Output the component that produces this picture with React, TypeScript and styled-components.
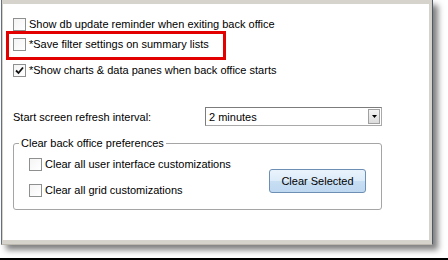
import styled, { createGlobalStyle } from "styled-components";

const GlobalStyle = createGlobalStyle`
  html, body {
    margin: 0;
    padding: 0;
    background: #fff;
  }
  body {
    font-family: "Liberation Sans", Arial, sans-serif;
    font-size: 11px;
    color: #000;
  }
`;

const Page = styled.div`
  width: 448px;
  height: 260px;
  box-sizing: border-box;
  border-bottom: 2px solid #000;
  overflow: hidden;
`;

const Frame = styled.div`
  margin-left: 1px;
  width: 432px;
  height: 245px;
  box-sizing: border-box;
  padding: 4px 3px 4px 1px;
  background: #d6d3cd;
  border-left: 1px solid #66707c;
  border-right: 1px solid #4f5966;
  border-bottom: 1px solid #bdb9b1;
  box-shadow: 5px 5px 6px rgba(0, 0, 0, 0.5);
  display: flex;
`;

const Panel = styled.div`
  flex: 1;
  background: #fff;
  padding: 14px 0 0 10px;
  display: flex;
  flex-direction: column;
`;

const CheckRow = styled.label<{ $top?: number }>`
  display: flex;
  align-items: center;
  gap: 3px;
  height: 13px;
  line-height: 13px;
  margin-top: ${({ $top }) => $top ?? 0}px;
  white-space: nowrap;
`;

const Box = styled.span`
  width: 13px;
  height: 13px;
  box-sizing: border-box;
  border: 1px solid #8e8f8f;
  background: linear-gradient(135deg, #f4f4f4, #fff);
  display: flex;
  align-items: center;
  justify-content: center;
  flex-shrink: 0;
`;

const Highlight = styled.div`
  margin-left: -7px;
  width: 220px;
  box-sizing: border-box;
  border: 3px solid #e30000;
  padding: 4px 0 6px 4px;
`;

const IntervalRow = styled.div`
  margin-top: 30px;
  display: flex;
  align-items: center;
`;

const Label = styled.span`
  width: 192px;
`;

const Select = styled.div`
  width: 177px;
  height: 19px;
  box-sizing: border-box;
  border: 1px solid #7c7c7c;
  border-right-color: #a9a9a9;
  border-bottom-color: #a9a9a9;
  display: flex;
  align-items: center;
  padding: 0 1px 0 3px;
`;

const SelectText = styled.span`
  flex: 1;
`;

const DropButton = styled.span`
  width: 12px;
  height: 15px;
  box-sizing: border-box;
  border: 1px solid #a0a0a0;
  background: linear-gradient(#f4f4f4, #dcdcdc);
  display: flex;
  align-items: center;
  justify-content: center;
`;

const Group = styled.fieldset`
  margin: 11px 0 0 0;
  width: 369px;
  box-sizing: border-box;
  border: 1px solid #a5a5a5;
  border-radius: 3px;
  padding: 0 15px 12px 15px;
  min-width: 0;
`;

const Legend = styled.legend`
  margin-left: -10px;
  padding: 0 2px;
  line-height: 13px;
`;

const GroupBody = styled.div`
  display: flex;
  padding-top: 8px;
`;

const Checks = styled.div`
  display: flex;
  flex-direction: column;
  gap: 13px;
`;

const ActionButton = styled.button`
  margin-left: auto;
  align-self: flex-end;
  margin-bottom: 4px;
  width: 97px;
  height: 24px;
  border: 1px solid #6d8fb3;
  border-radius: 3px;
  background: linear-gradient(#e9f3fc 0%, #dcebf9 50%, #c7def3 52%, #bfd9f1 100%);
  font: inherit;
  color: #000;
  padding: 0;
`;

const Check = () => (
  <svg width="9" height="9" viewBox="0 0 9 9">
    <path d="M1 4.5 L3.5 7 L8 1.5" fill="none" stroke="#111" strokeWidth="1.8" />
  </svg>
);

const Checkbox = ({ label, checked, top }: { label: string; checked?: boolean; top?: number }) => (
  <CheckRow $top={top}>
    <Box>{checked && <Check />}</Box>
    <span>{label}</span>
  </CheckRow>
);

export default function App() {
  return (
    <>
      <GlobalStyle />
      <Page>
        <Frame>
          <Panel>
            <Checkbox label="Show db update reminder when exiting back office" />
            <Highlight>
              <Checkbox label="*Save filter settings on summary lists" />
            </Highlight>
            <Checkbox label="*Show charts & data panes when back office starts" checked top={4} />

            <IntervalRow>
              <Label>Start screen refresh interval:</Label>
              <Select>
                <SelectText>2 minutes</SelectText>
                <DropButton>
                  <svg width="5" height="3" viewBox="0 0 5 3">
                    <path d="M0 0 H5 L2.5 3 Z" fill="#000" />
                  </svg>
                </DropButton>
              </Select>
            </IntervalRow>

            <Group>
              <Legend>Clear back office preferences</Legend>
              <GroupBody>
                <Checks>
                  <Checkbox label="Clear all user interface customizations" />
                  <Checkbox label="Clear all grid customizations" />
                </Checks>
                <ActionButton>Clear Selected</ActionButton>
              </GroupBody>
            </Group>
          </Panel>
        </Frame>
      </Page>
    </>
  );
}
